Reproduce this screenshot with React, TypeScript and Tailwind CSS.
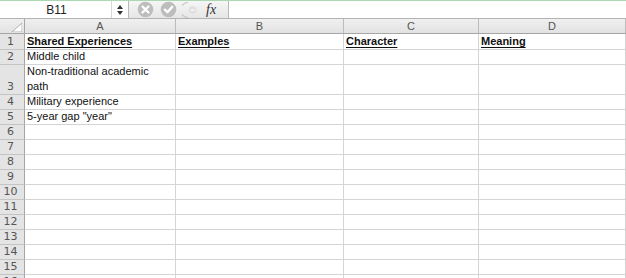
import React from "react";

const rows: { n: number; h: string; bold?: boolean; cells?: string[] }[] = [
  { n: 1, h: "h-[16px]", bold: true, cells: ["Shared Experiences", "Examples", "Character", "Meaning"] },
  { n: 2, h: "h-[15px]", cells: ["Middle child"] },
  { n: 3, h: "h-[30px]", cells: ["Non-traditional academic\npath"] },
  { n: 4, h: "h-[15px]", cells: ["Military experience"] },
  { n: 5, h: "h-[15px]", cells: ['5-year gap "year"'] },
  ...Array.from({ length: 11 }, (_, i) => ({ n: i + 6, h: "h-[15px]", cells: [] as string[] })),
];

const cols = ["A", "B", "C", "D"];
const colW = ["w-[151px]", "w-[168px]", "w-[135px]", "flex-1"];

function Toolbar() {
  return (
    <div className="flex h-[19px] border-t border-t-[#a9d8b2] border-b border-b-[#b3b3b3] bg-white">
      <div className="w-[111px] flex items-center justify-center text-[12px] text-[#222] pl-[2px]">B11</div>
      <div className="w-[18px] border-l border-[#d8d8d8] border-r border-r-[#b8b8b8] flex flex-col items-center justify-center gap-[2px]">
        <svg width="6" height="4" viewBox="0 0 6 4"><path d="M3 0L6 4H0z" fill="#333" /></svg>
        <svg width="6" height="4" viewBox="0 0 6 4"><path d="M0 0H6L3 4z" fill="#333" /></svg>
      </div>
      <div className="w-[100px] bg-gradient-to-b from-[#f6f6f6] to-[#e6e6e6] border-r border-[#b8b8b8] flex items-center">
        <svg width="17" height="17" viewBox="0 0 16 16" className="ml-[8px]">
          <circle cx="8" cy="8" r="7.3" fill="#bdbdbd" />
          <path d="M5.2 5.2L10.8 10.8M10.8 5.2L5.2 10.8" stroke="#fff" strokeWidth="2.2" strokeLinecap="round" />
        </svg>
        <svg width="17" height="17" viewBox="0 0 16 16" className="ml-[6px]">
          <circle cx="8" cy="8" r="7.3" fill="#bdbdbd" />
          <path d="M4.5 8.2L7 10.5L11.5 5.5" stroke="#fff" strokeWidth="2.2" fill="none" strokeLinecap="round" strokeLinejoin="round" />
        </svg>
        <svg width="18" height="18" viewBox="0 0 18 18" className="ml-[5px]">
          <path d="M6 1.5A7.5 7.5 0 0 0 6 16.5" stroke="#c4c4c4" strokeWidth="1.2" fill="none" />
          <circle cx="10.5" cy="9" r="3.8" fill="#dedede" />
          <path d="M8.5 9H12.5" stroke="#fff" strokeWidth="1.2" />
        </svg>
        <span className="ml-[6px] italic text-[14px] text-[#333]" style={{ fontFamily: '"Liberation Serif", serif' }}>fx</span>
      </div>
      <div className="flex-1 bg-white" />
    </div>
  );
}

export default function App() {
  return (
    <div className="w-[626px] h-[278px] overflow-hidden bg-white" style={{ fontFamily: '"Liberation Sans", Arial, sans-serif' }}>
      <Toolbar />
      <div className="flex h-[15px] bg-gradient-to-b from-[#f0f0f0] to-[#e2e2e2] border-b border-[#a6a6a6]">
        <div className="w-[25px] border-r border-[#a6a6a6] relative">
          <svg width="10" height="9" viewBox="0 0 10 9" className="absolute right-[2px] bottom-[1px]">
            <path d="M10 0V9H0z" fill="#fff" stroke="#a0a0a0" strokeWidth="0.8" />
          </svg>
        </div>
        {cols.map((c, i) => (
          <div key={c} className={`${colW[i]} border-r border-[#bcbcbc] flex items-center justify-center text-[11px] leading-none text-[#555]`}>
            {c}
          </div>
        ))}
      </div>
      {rows.map((r) => (
        <div key={r.n} className={`flex ${r.h}`}>
          <div className="w-[25px] bg-[#e4e4e4] border-r border-[#a6a6a6] border-b border-b-[#c4c4c4] flex items-end justify-center pr-[3px] text-[11px] leading-[14px] text-[#555]" style={{ fontFamily: '"DejaVu Sans", sans-serif' }}>
            {r.n}
          </div>
          {cols.map((c, i) => {
            const text = r.cells?.[i];
            return (
              <div key={c} className={`${colW[i]} border-r border-b border-[#d4d4d4] flex items-end px-[2px] text-[11px] leading-[15px] text-[#111] ${r.bold ? "font-bold underline underline-offset-[2px]" : ""}`}>
                {text && <span className="whitespace-pre-line">{text}</span>}
              </div>
            );
          })}
        </div>
      ))}
    </div>
  );
}
